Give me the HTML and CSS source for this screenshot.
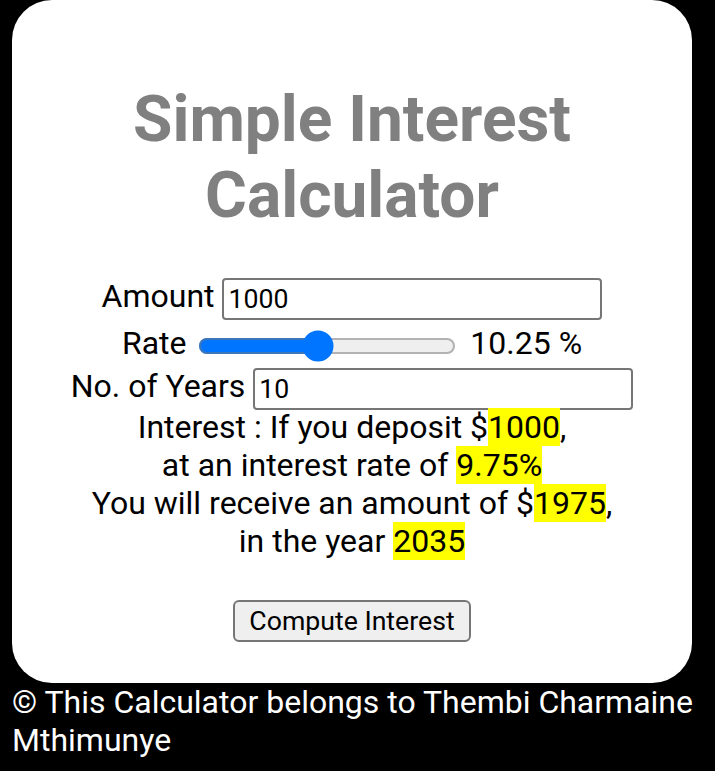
FILE: index.html
```html
<!DOCTYPE html>
<html lang="en">
<head>
<meta charset="utf-8">
<title>Simple Interest Calculator</title>
<link rel="stylesheet" href="styles.css">
</head>
<body>
<main class="card">
  <h1 class="title">Simple Interest Calculator</h1>
  <div class="row">Amount <input class="field" type="number" value="1000"></div>
  <div class="row rate-row">Rate <input class="slider" type="range" min="1" max="20" step="0.25" value="9.75"> <span class="rate-val">10.25 %</span></div>
  <div class="row">No. of Years <input class="field" type="number" value="10"></div>
  <p class="result">Interest : If you deposit $<mark>1000</mark>,<br>at an interest rate of <mark>9.75%</mark><br>You will receive an amount of $<mark>1975</mark>,<br>in the year <mark>2035</mark></p>
  <button class="btn" type="button">Compute Interest</button>
</main>
<footer class="footer">© This Calculator belongs to Thembi Charmaine Mthimunye</footer>
</body>
</html>
```
FILE: styles.css
```css
html, body {
  background: #000;
}
body {
  margin: 0;
  padding: 0 12px;
  font-family: Roboto, "Liberation Sans", sans-serif;
  font-size: 32px;
  line-height: 38px;
}
.card {
  width: 680px;
  box-sizing: border-box;
  background: #fff;
  border-radius: 40px;
  text-align: center;
  color: #000;
  padding: 82px 0 41px;
}
.title {
  margin: 0 0 42px;
  font-size: 64px;
  line-height: 76px;
  font-weight: 700;
  color: #808080;
}
.row {
  line-height: 38px;
}
.rate-row {
  padding-top: 2px;
}
.field {
  width: 380px;
  height: 42px;
  box-sizing: border-box;
  font-family: Roboto, "Liberation Sans", sans-serif;
  font-size: 26.67px;
  padding: 1px 4px;
  border: 2px solid #767676;
  border-radius: 4px;
  vertical-align: middle;
  margin: 2px 0;
  -moz-appearance: textfield;
}
.field::-webkit-inner-spin-button,
.field::-webkit-outer-spin-button {
  -webkit-appearance: none;
  margin: 0;
}
.slider {
  zoom: 2;
  vertical-align: middle;
}
.rate-val {
  margin-left: 2px;
}
.result {
  margin: -4px 0 40px;
}
mark {
  background: #ffff00;
  color: #000;
}
.btn {
  font-family: Roboto, "Liberation Sans", sans-serif;
  font-size: 26.67px;
  height: 42px;
  padding: 0 14px;
  background: #efefef;
  border: 2px solid #767676;
  border-radius: 6px;
  color: #000;
}
.footer {
  color: #fff;
}
```
